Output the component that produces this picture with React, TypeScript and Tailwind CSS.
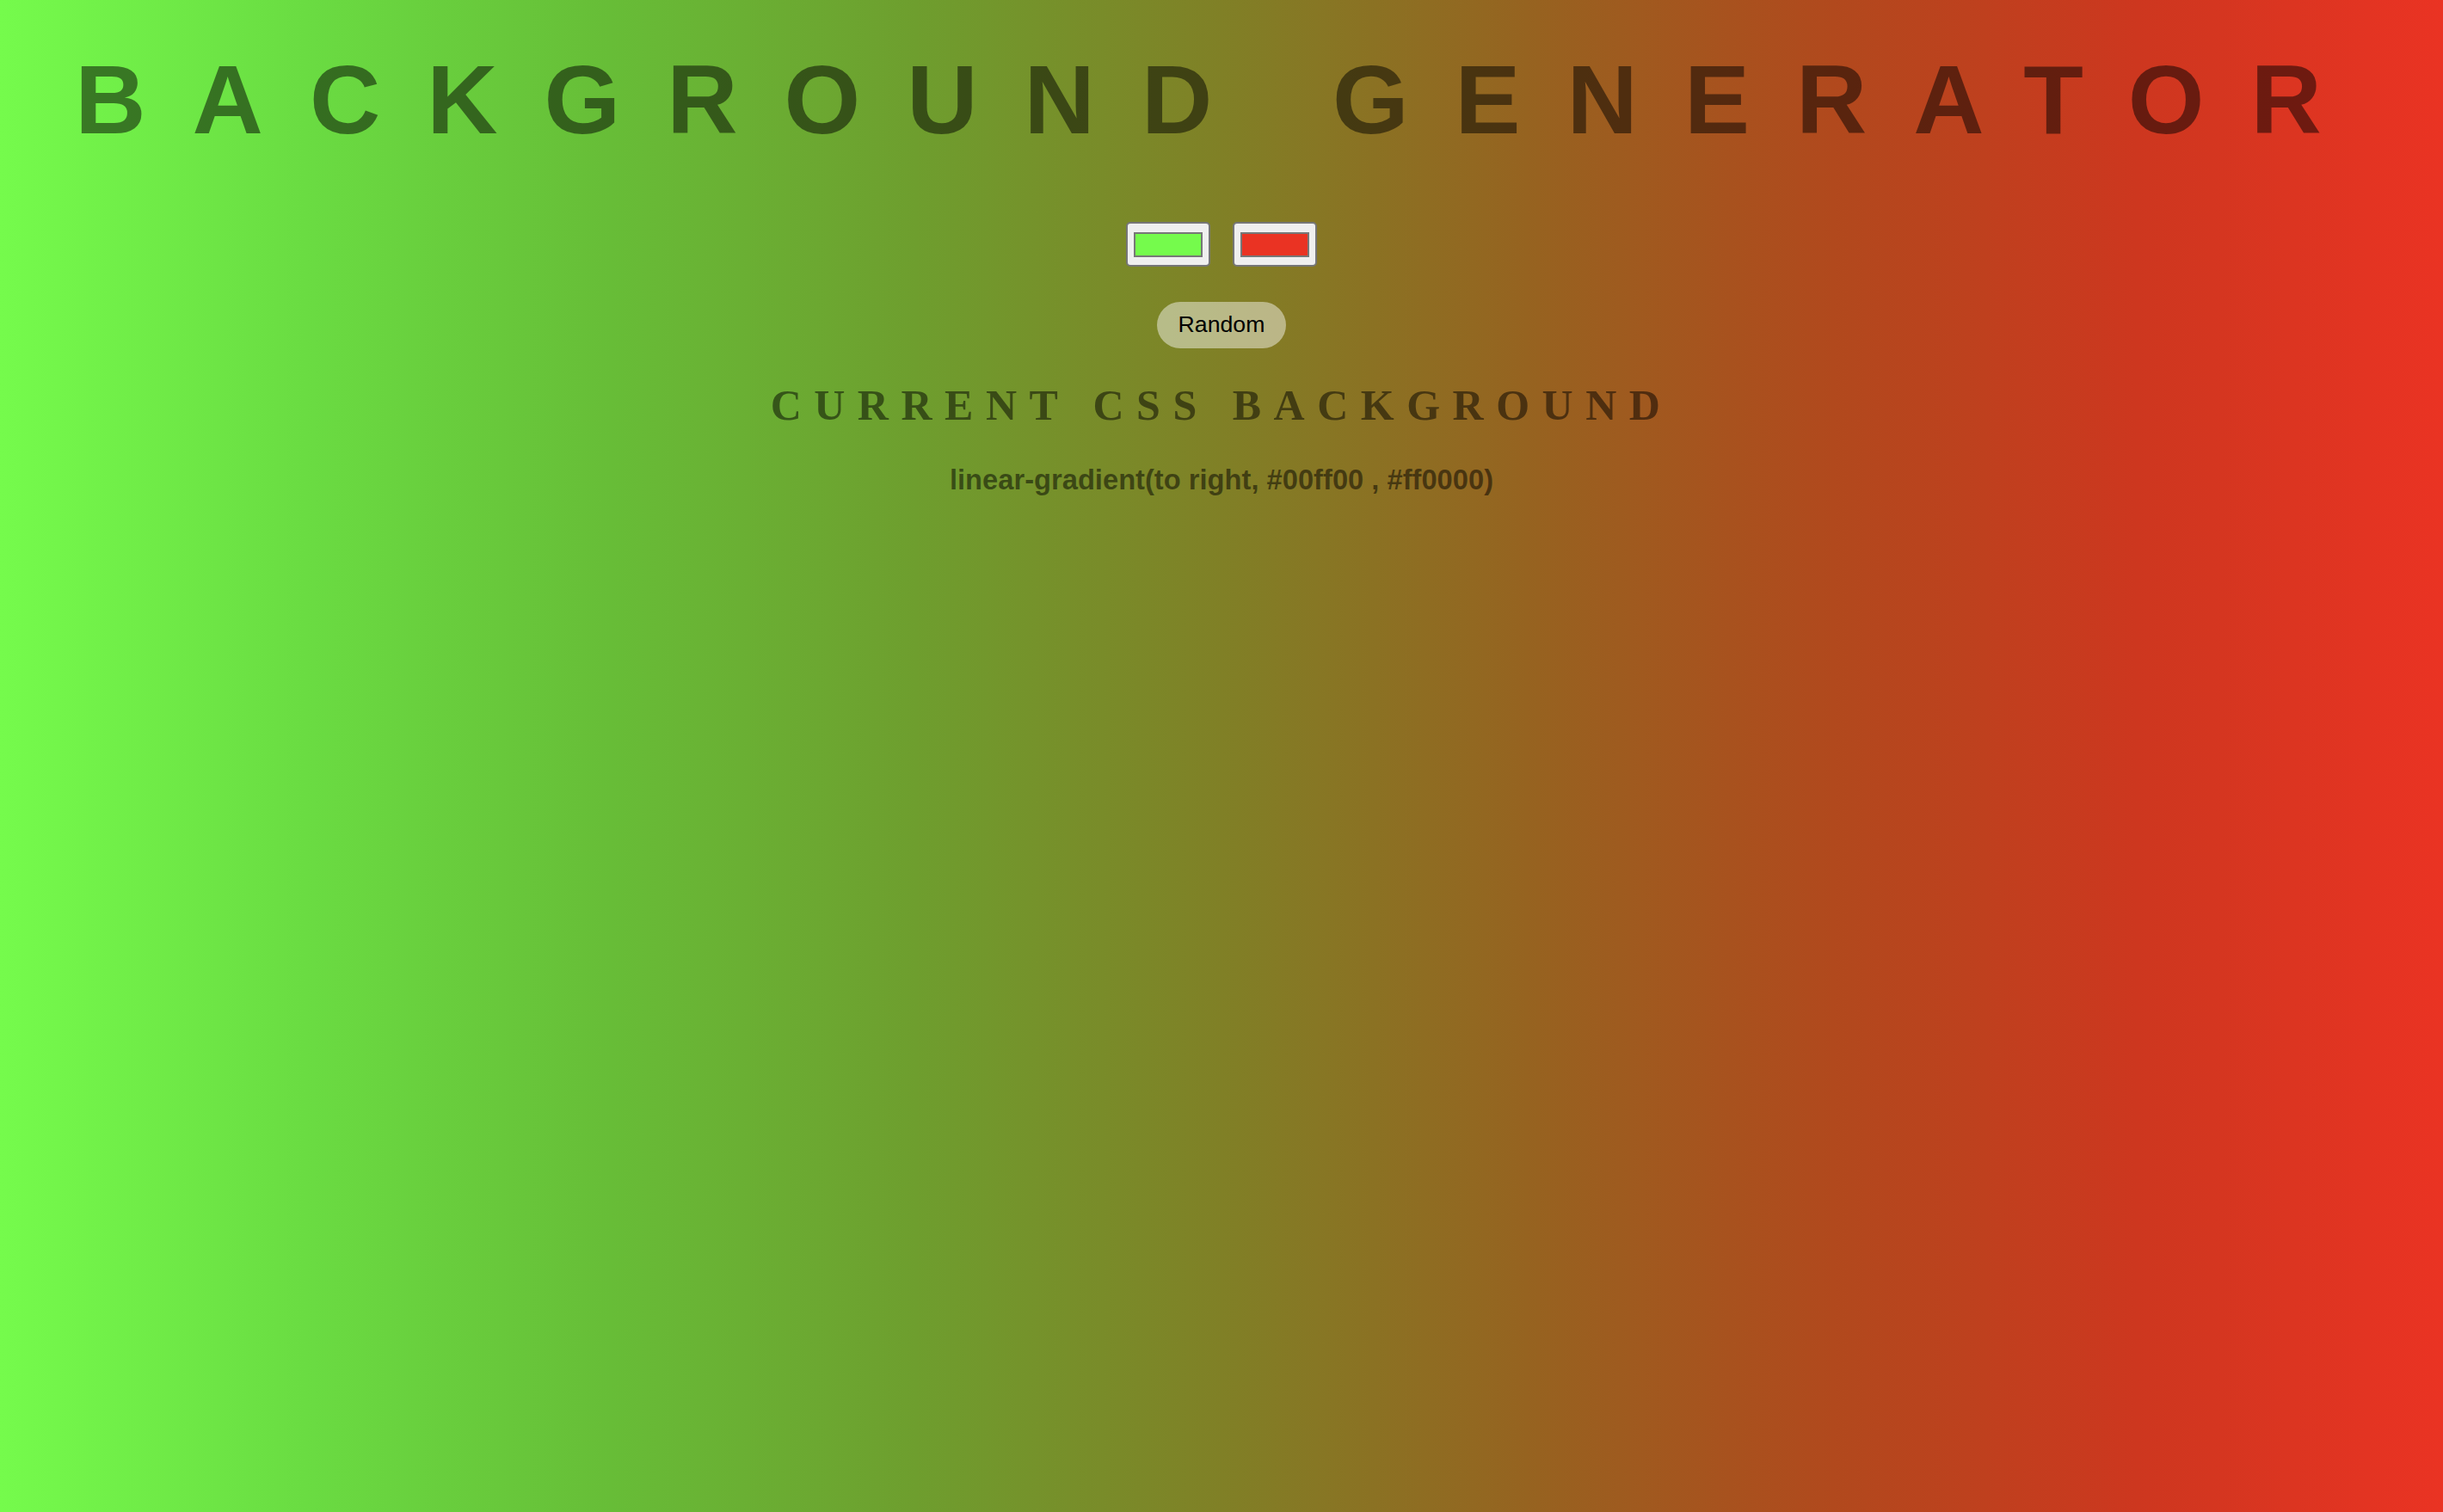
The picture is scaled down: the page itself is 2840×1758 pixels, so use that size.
import { useState } from "react";

// Colours as they show up in the reference (sRGB gradient seen through a P3 screen).
const COLOR_ONE = "#75fb4c";
const COLOR_TWO = "#ea3323";

function Swatch({ color }: { color: string }) {
  return (
    <div className="w-[98px] h-[52px] rounded-[5px] border-2 border-[#767676] bg-[#efefef] flex items-center justify-center">
      <div className="w-[80px] h-[29px] border-2 border-[#777777]" style={{ backgroundColor: color }} />
    </div>
  );
}

export default function App() {
  const [css] = useState("linear-gradient(to right, #00ff00 , #ff0000)");

  return (
    <div className="min-h-screen w-full flex flex-col items-center text-center font-['Liberation_Sans',Arial,sans-serif] bg-[linear-gradient(to_right,#75fb4c_0%,#6adc42_12.5%,#67bd37_25%,#6e9e2e_37.5%,#808026_50%,#966320_62.5%,#b1491d_75%,#cd371f_87.5%,#ea3323_100%)]">
      {/* title */}
      <h1 className="mt-[59px] text-[114px] leading-none font-bold tracking-[54px] text-black/50 whitespace-nowrap">
        BACKGROUND GENERATOR
      </h1>

      {/* colour pickers */}
      <div className="mt-[85px] flex gap-[26px]">
        <Swatch color={COLOR_ONE} />
        <Swatch color={COLOR_TWO} />
      </div>

      {/* random button */}
      <button className="mt-[41px] h-[54px] px-[25px] rounded-full bg-white/45 text-black text-[26.67px] leading-none flex items-center pb-[2px]">
        Random
      </button>

      <h2 className="mt-[41px] text-[50px] leading-none font-bold tracking-[14.5px] text-black/50 font-['Liberation_Serif','Times_New_Roman',serif] whitespace-nowrap">
        CURRENT CSS BACKGROUND
      </h2>

      <h3 className="mt-[46px] text-[32.7px] leading-none font-bold text-black/50 whitespace-nowrap">
        {css}
      </h3>
    </div>
  );
}
